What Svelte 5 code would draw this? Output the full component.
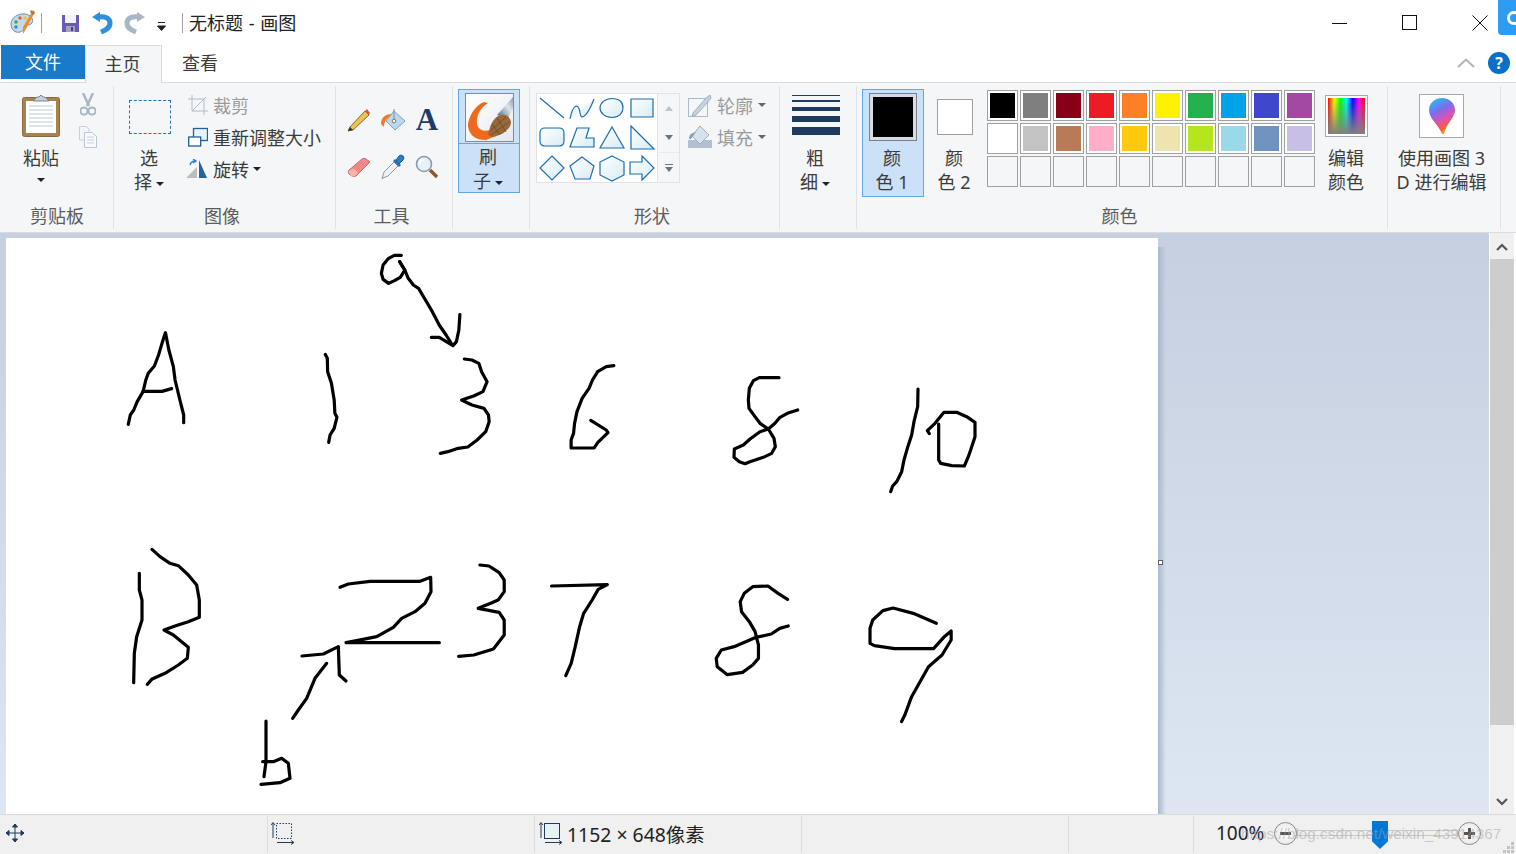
<script>
  const row1 = ['#000000','#7f7f7f','#880015','#ed1c24','#ff7f27','#fff200','#22b14c','#00a2e8','#3f48cc','#a349a4']
  const row2 = ['#ffffff','#c3c3c3','#b97a57','#ffaec9','#ffc90e','#efe4b0','#b5e61d','#99d9ea','#7092be','#c8bfe7']
  const row3 = Array(10).fill('transparent')

  // strokes traced from crops, each group has its own offset + scale
  const groups = [
    { x: 100, y: 240, sx: 2.9037, sy: 3, paths: [
      'M82 553 L88 525 L98 510 L108 485 L125 455 L133 420 L140 400 L158 378 L170 345 L180 310 L190 278 L200 330 L213 380 L218 420 L232 480 L243 525 L243 548',
      'M125 454 L180 454 L208 446',
      'M654 343 L660 355 L661 395 L672 430 L680 480 L682 520 L688 532 L680 565 L668 585 L664 607',
      'M875 46 L855 46 L838 55 L822 75 L817 100 L822 118 L838 130 L855 122 L872 112 L885 90 L870 65',
      'M870 65 L885 90 L895 115 L910 135 L925 145 L945 180 L965 215 L985 255 L1005 285 L1020 310',
      'M962 292 L985 292 L1025 317 L1035 305 L1042 270 L1045 224',
      'M1058 357 L1080 360 L1100 370 L1108 395 L1124 425 L1112 455 L1085 468 L1050 480 L1080 495 L1115 505 L1128 525 L1130 545 L1120 575 L1095 600 L1068 621 L1040 625 L1010 635 L988 640',
      'M1492 377 L1470 380 L1445 395 L1430 420 L1420 445 L1400 475 L1385 515 L1378 550 L1375 580 L1368 600 L1368 624 L1435 624 L1445 608 L1475 578 L1470 570 L1425 541'
    ]},
    { x: 700, y: 360, sx: 3, sy: 3, paths: [
      'M237 53 L178 53 L160 62 L148 85 L145 120 L147 145 L165 170 L180 190 L205 207 L222 235 L226 260 L215 280 L190 292 L150 305 L135 311 L118 305 L102 292 L103 267 L130 255 L150 237 L180 215 L205 207 L225 190 L240 172 L262 160 L293 150',
      'M654 87 L653 140 L642 185 L635 225 L622 265 L612 300 L605 335 L590 365 L578 378 L572 395',
      'M688 221 L682 212 L705 190 L732 157 L770 157 L800 170 L825 187 L825 230 L812 270 L805 290 L793 318 L755 317 L722 310 L716 300 L716 192'
    ]},
    { x: 110, y: 540, sx: 3, sy: 3, paths: [
      'M88 100 L88 150 L96 180 L96 240 L80 290 L73 340 L71 428',
      'M126 28 L150 50 L180 70 L205 77 L235 105 L260 135 L268 180 L268 232 L235 245 L195 258 L162 270 L190 285 L235 322 L232 355 L205 375 L165 400 L125 418 L112 433',
      'M690 142 L715 132 L780 124 L930 124 L962 112 L963 155 L945 190 L915 215 L875 235 L850 262 L800 290 L740 302 L708 308 L988 308',
      'M576 348 L640 342 L685 320 L688 405 L708 423',
      'M650 370 L615 415 L590 475 L565 510 L548 535',
      'M468 543 L468 665 L462 710',
      'M458 665 L490 665 L515 655 L535 670 L540 715 L510 728 L453 733'
    ]},
    { x: 440, y: 550, sx: 2.958, sy: 3, paths: [
      'M118 45 L145 48 L175 68 L190 90 L190 125 L172 150 L150 160 L113 175 L175 187 L190 210 L190 255 L158 297 L100 315 L55 319',
      'M330 108 L495 104 L468 118 L450 150 L425 190 L413 230 L400 290 L388 340 L372 377',
      'M1028 148 L1000 130 L970 108 L925 110 L900 130 L888 155 L892 185 L915 215 L932 245 L942 285 L942 325 L925 345 L895 367 L850 374 L820 350 L817 325 L832 300 L870 290 L935 262 L980 252 L1005 235 L1030 228',
      'M1468 220 L1400 190 L1340 174 L1310 182 L1280 210 L1272 235 L1272 280 L1285 287 L1345 296 L1460 296 L1490 262 L1512 243 L1512 270 L1485 315 L1445 350 L1420 395 L1395 440 L1375 495 L1365 515'
    ]}
  ]

  const shapes = [
    'M3 3 L27 23',
    'M3 24 C6 8 12 8 13 18 C14 27 21 20 27 4',
    'M15 3.5 C23 3.5 26 8 26 13 C26 18 22 22.5 15 22.5 C8 22.5 3 18 3 13 C3 8 8 3.5 15 3.5 Z',
    'M4 4 H26 V22 H4 Z',
    'M8 4 H22 Q27 4 27 9 V17 Q27 22 22 22 H8 Q3 22 3 17 V9 Q3 4 8 4 Z',
    'M10 4 H22 L19 14 H27 V23 H3 Z',
    'M15 3 L27 24 H3 Z',
    'M4 2 L27 25 H4 Z',
    'M15 2 L27 14 L15 26 L3 14 Z',
    'M15 3 L27 12 L23 25 H8 L3 12 Z',
    'M15 2 L27 8 V21 L15 27 L3 21 V8 Z',
    'M3 8 H15 V2 L27 14 L15 26 V20 H3 Z'
  ]
</script>

<div class="app">
  <header class="titlebar">
    <svg class="palette" width="28" height="28" viewBox="0 0 28 28">
      <path d="M2 16 C2 10 9 5 16 6 C22 7 25 11 23 15 C21 18 18 16 16 19 C15 23 11 25 7 24 C4 23 2 20 2 16 Z" fill="#c4d9ea" stroke="#6f8fae"/>
      <circle cx="7" cy="14" r="1.7" fill="#3fa34d"/><circle cx="11" cy="10" r="1.7" fill="#e2574c"/>
      <circle cx="16" cy="10" r="1.7" fill="#f1c232"/><circle cx="7" cy="19" r="1.7" fill="#3d85c6"/>
      <path d="M24 2 L26 4 L17 21 L14 26 L14 19 Z" fill="#e98f2c"/>
      <path d="M22 2 L26 5 L24 7 L21 4 Z" fill="#a67c52"/>
    </svg>
    <span class="tsep first"></span>
    <svg class="save" width="17" height="17" viewBox="0 0 17 17">
      <path d="M0 0 H17 V17 H0 Z" fill="#6a5bb0"/><path d="M3 0 H14 V8 H3 Z" fill="#f4f3fa"/><path d="M4 11 H13 V17 H4 Z" fill="#a7a1c0"/><path d="M9 12 H11 V16 H9 Z" fill="#4a3c8c"/>
    </svg>
    <svg class="undo" width="21" height="22" viewBox="0 0 21 22">
      <path d="M0 5 L8 0 V10 Z" fill="#2e8fdb"/>
      <path d="M6 5 C13 4 18 6 18 11 C18 16 14 18 9 20" fill="none" stroke="#2e8fdb" stroke-width="5"/>
    </svg>
    <svg class="redo" width="21" height="22" viewBox="0 0 21 22">
      <path d="M21 5 L13 0 V10 Z" fill="#a9b6c4"/>
      <path d="M15 5 C8 4 3 6 3 11 C3 16 7 18 12 20" fill="none" stroke="#a9b6c4" stroke-width="5"/>
    </svg>
    <svg class="qat" width="9" height="9" viewBox="0 0 9 9">
      <path d="M1 0.5 H8 M0.5 4 H8.5 L4.5 8.5 Z" fill="#222" stroke="#222"/>
    </svg>
    <span class="tsep second"></span>
    <span class="title">无标题 - 画图</span>
    <div class="winctl">
      <svg width="16" height="16" viewBox="0 0 16 16"><path d="M0 8.5 H15" stroke="#111"/></svg>
      <svg width="16" height="16" viewBox="0 0 16 16"><rect x="0.5" y="0.5" width="14" height="14" fill="none" stroke="#111"/></svg>
      <svg width="16" height="16" viewBox="0 0 16 16"><path d="M0.5 0.5 L15.5 15.5 M15.5 0.5 L0.5 15.5" stroke="#111"/></svg>
    </div>
    <div class="floatblue"><span></span></div>
  </header>

  <nav class="tabs">
    <span class="tab file">文件</span>
    <span class="tab home">主页</span>
    <span class="tab view">查看</span>
    <div class="tabright">
      <svg width="18" height="10" viewBox="0 0 18 10"><path d="M1 9 L9 1.5 L17 9" fill="none" stroke="#b4b4b4" stroke-width="2"/></svg>
      <span class="help">?</span>
    </div>
  </nav>

  <section class="ribbon">
    <div class="group clip">
      <div class="body">
        <div class="bigcol paste">
          <svg width="38" height="43" viewBox="0 0 38 43">
            <rect x="0.5" y="3.5" width="37" height="39" rx="2" fill="#a8834f" stroke="#8b6a3a"/>
            <rect x="4" y="7" width="30" height="32" fill="#fff"/>
            <path d="M7 12 H31 M7 16 H31 M7 20 H31 M7 24 H31 M7 28 H31 M7 32 H31" stroke="#b9c6d3"/>
            <path d="M11 7 L15 3 H17 L19 1 L21 3 H23 L27 7 Z" fill="#c9ced3" stroke="#7d858c"/>
          </svg>
          <span class="txt top">粘贴</span>
          <i class="caret solo"></i>
        </div>
        <div class="smallcol">
          <svg width="16" height="24" viewBox="0 0 16 24">
            <path d="M3 0 L9 13 M13 0 L7 13" stroke="#a6b4c4" stroke-width="2.4" fill="none"/>
            <circle cx="4" cy="18" r="3.6" fill="none" stroke="#a6b4c4" stroke-width="2"/><circle cx="12" cy="18" r="3.6" fill="none" stroke="#a6b4c4" stroke-width="2"/>
          </svg>
          <svg width="18" height="22" viewBox="0 0 18 22">
            <path d="M0.5 0.5 H7 L10 3 V14 H0.5 Z" fill="#f3f6f9" stroke="#c3d0de"/>
            <path d="M5.5 6.5 H13 L17.5 10.5 V21.5 H5.5 Z" fill="#f7f9fb" stroke="#b6c6d6"/>
            <path d="M8 11 H15 M8 14 H15 M8 17 H15" stroke="#c3d0de"/>
          </svg>
        </div>
      </div>
      <div class="label">剪贴板</div>
    </div>

    <div class="group image">
      <div class="body">
        <div class="bigcol select">
          <div class="dashed"></div>
          <span class="txt nudge">选</span>
          <span class="txt nudge">择<i class="caret"></i></span>
        </div>
        <div class="cmds">
          <div class="cmd off">
            <svg width="20" height="20" viewBox="0 0 20 20"><path d="M4 0 V16 H20 M0 4 H16 V20 M4 16 L18 2" fill="none" stroke="#b0bccb"/></svg>
            <span>裁剪</span>
          </div>
          <div class="cmd">
            <svg width="20" height="20" viewBox="0 0 20 20"><rect x="5.5" y="1.5" width="14" height="12" fill="#e6f2f8" stroke="#1f5f9c" stroke-width="1.3"/><rect x="0.7" y="10" width="12" height="9" fill="#fff" stroke="#1f5f9c" stroke-width="1.3"/></svg>
            <span>重新调整大小</span>
          </div>
          <div class="cmd">
            <svg width="22" height="20" viewBox="0 0 22 20"><path d="M0 19 L11 8 V19 Z" fill="#bcbcbc"/><path d="M13 1 L21 19 H13 Z" fill="#27639e"/><path d="M4 6 Q5 2 9 2 M7 0 L10 2 L7 4" fill="none" stroke="#2b83d2" stroke-width="1.4"/></svg>
            <span>旋转</span><i class="caret"></i>
          </div>
        </div>
      </div>
      <div class="label shift">图像</div>
    </div>

    <div class="group tools">
      <div class="body toolgrid">
        <svg width="24" height="24" viewBox="0 0 24 24">
          <path d="M3 19 L18 3 L22 7 L6 22 L1 23 Z" fill="#f2c14e" stroke="#7a6a3a"/><path d="M18 3 L20 1 L23 5 L22 7 Z" fill="#d9534f"/><path d="M1 23 L3 19 L6 22 Z" fill="#333"/>
        </svg>
        <svg width="26" height="24" viewBox="0 0 26 24">
          <path d="M14 3 L25 13 L15 22 L6 13 Z" fill="#bcd8ee" stroke="#7ea4c4"/>
          <path d="M1 16 C1 9 6 6 12 6 L8 10 C6 11 4 15 4 19 Z" fill="#ee7a2a"/>
          <path d="M14 1 V12" stroke="#8a8a8a"/><circle cx="14" cy="13" r="1.8" fill="#fff" stroke="#777"/>
        </svg>
        <span class="bigA">A</span>
        <svg width="24" height="22" viewBox="0 0 24 22">
          <path d="M1 15 L15 3 Q17 1.5 19 3 L23 6 L9 20 Q7 21 5 20 L2 18 Z" fill="#f08a8a" stroke="#c86a6a"/><path d="M1 15 L7 13 L11 17 L8 20 Q6 21 4 20 Z" fill="#f4b6ac"/>
        </svg>
        <svg width="24" height="26" viewBox="0 0 24 26">
          <path d="M2 24 L1 25 L3 18 L13 8 L17 12 L7 22 Z" fill="#eef2f6" stroke="#8b98a6"/>
          <path d="M12 7 L18 13 L20 11 L14 5 Z" fill="#2d6fb5"/>
          <path d="M15 6 L18 2 Q20 0 22 2 Q24 4 22 6 L18 10 Z" fill="#2b7fc6" stroke="#1f5f9c"/>
        </svg>
        <svg width="24" height="24" viewBox="0 0 24 24">
          <circle cx="9" cy="9" r="7.5" fill="#e9f1f8" stroke="#8c9aa8" stroke-width="1.6"/>
          <path d="M4.5 9 Q5 5 9 4.5" fill="none" stroke="#fff" stroke-width="1.5"/>
          <path d="M15 15 L22 22" stroke="#8a5a30" stroke-width="3.4"/>
        </svg>
      </div>
      <div class="label shift">工具</div>
    </div>

    <div class="group brush">
      <div class="body">
        <div class="brushbtn">
          <div class="brushtop">
            <div class="brushicon">
              <svg width="47" height="47" viewBox="0 0 47 47">
                <defs>
                  <linearGradient id="handle" x1="0" y1="1" x2="1" y2="0"><stop offset="0" stop-color="#4a5f80"/><stop offset=".6" stop-color="#dfe5ec"/><stop offset="1" stop-color="#8d99a8"/></linearGradient>
                </defs>
                <path d="M31 21 L47 3 V14 L42 24 Z" fill="url(#handle)"/>
                <path d="M18 8 C8 12 2 24 2 32 C3 40 8 46 20 46 L30 42 L24 36 C18 38 12 36 11 30 C10 22 14 14 22 9 Z" fill="#ee6a1f"/>
                <path d="M32 22 C38 19 44 22 45 28 C45 35 36 42 26 43 L22 41 C24 32 26 26 32 22 Z" fill="#96683b"/>
                <path d="M25 36 L40 23 M25 41 L43 28 M31 24 L40 38 M26 30 L34 41" stroke="#6d4822" stroke-width=".8"/>
              </svg>
            </div>
          </div>
          <div class="brushtext">
            <span class="txt nudge">刷</span>
            <span class="txt nudge">子<i class="caret"></i></span>
          </div>
        </div>
      </div>
      <div class="label"></div>
    </div>

    <div class="group shapes">
      <div class="body">
        <div class="gallery">
          {#each shapes as d}
            <svg width="30" height="30" viewBox="0 0 30 30">
              <defs>
                <linearGradient id="shfill" x1="0" y1="0" x2="1" y2="1"><stop offset="0" stop-color="#fff"/><stop offset="1" stop-color="#d8ecf4"/></linearGradient>
              </defs>
              <path {d} fill="url(#shfill)" stroke="#1c6eae" stroke-width="1.2"/>
            </svg>
          {/each}
        </div>
        <div class="gscroll">
          <span class="gb"><i class="up"></i></span>
          <span class="gb"><i class="down"></i></span>
          <span class="gb more"><i class="bar"></i><i class="down"></i></span>
        </div>
        <div class="cmds outline">
          <div class="cmd off">
            <svg width="24" height="23" viewBox="0 0 24 23"><rect x="0.5" y="4.5" width="19" height="18" fill="none" stroke="#a9bace"/><path d="M5 19 L18 4 L22 1 L23 4 L20 8 L8 21 L4 22 Z" fill="#c5d2e0" stroke="#a0b0c3"/></svg>
            <span>轮廓</span><i class="caret gray"></i>
          </div>
          <div class="cmd off">
            <svg width="24" height="24" viewBox="0 0 24 24"><rect x="0" y="15" width="24" height="8" fill="#b2c0d4"/><path d="M12 1 L21 10 L12 19 L4 11 Z" fill="#d8e2ec" stroke="#9eaec2"/><path d="M1 14 C1 9 4 8 8 7 L3 14 Z" fill="#8f9fb6"/></svg>
            <span>填充</span><i class="caret gray"></i>
          </div>
        </div>
      </div>
      <div class="label shift">形状</div>
    </div>

    <div class="group size">
      <div class="body">
        <div class="bigcol thick">
          <div class="lines"><i class="l1"></i><i class="l2"></i><i class="l3"></i><i class="l4"></i><i class="l5"></i></div>
          <span class="txt nudge">粗</span>
          <span class="txt nudge">细<i class="caret"></i></span>
        </div>
      </div>
      <div class="label"></div>
    </div>

    <div class="group colors">
      <div class="body">
        <div class="colbtn active">
          <div class="bigswatch"><span></span></div>
          <span class="txt nudge">颜</span>
          <span class="txt nudge">色 1</span>
        </div>
        <div class="colbtn second">
          <div class="swatch2"></div>
          <span class="txt nudge">颜</span>
          <span class="txt nudge">色 2</span>
        </div>
        <div class="palettegrid">
          {#each [...row1, ...row2, ...row3] as c}
            <span class="cell"><span style="background:{c}"></span></span>
          {/each}
        </div>
        <div class="bigcol edit">
          <div class="rainbow"><span></span></div>
          <span class="txt">编辑</span>
          <span class="txt">颜色</span>
        </div>
      </div>
      <div class="label shift">颜色</div>
    </div>

    <div class="group p3d">
      <div class="body">
        <div class="bigcol threed">
          <div class="p3dicon">
            <svg width="28" height="38" viewBox="0 0 28 38">
              <defs>
                <linearGradient id="drop" x1="0.2" y1="0" x2="0.6" y2="1">
                  <stop offset="0" stop-color="#22c3f0"/><stop offset=".35" stop-color="#7b6cf0"/><stop offset=".65" stop-color="#e64fa8"/><stop offset=".85" stop-color="#f4622e"/><stop offset="1" stop-color="#f3b32a"/>
                </linearGradient>
              </defs>
              <path d="M14 1 C22 1 27 7 27 13 C27 21 18 26 16 37 L14 37 C11 28 1 22 1 13 C1 7 6 1 14 1 Z" fill="url(#drop)"/>
            </svg>
          </div>
          <span class="txt">使用画图 3</span>
          <span class="txt">D 进行编辑</span>
        </div>
      </div>
      <div class="label"></div>
    </div>
  </section>

  <main class="workspace">
    <div class="area">
      <div class="paper">
        <svg width="1152" height="648" viewBox="6 238 1152 648">
          {#each groups as g}
            <g transform="translate({g.x} {g.y}) scale({1 / g.sx} {1 / g.sy})">
              {#each g.paths as d}
                <path {d} fill="none" stroke="#000" stroke-width="3.2" stroke-linecap="round" stroke-linejoin="round" vector-effect="non-scaling-stroke"/>
              {/each}
            </g>
          {/each}
        </svg>
      </div>
      <span class="shadow"></span>
      <span class="handle"></span>
    </div>
    <div class="vscroll">
      <span class="sbtn"><svg width="12" height="8" viewBox="0 0 12 8"><path d="M1 7 L6 2 L11 7" fill="none" stroke="#555" stroke-width="2.2"/></svg></span>
      <span class="thumb"></span>
      <span class="strack"></span>
      <span class="sbtn"><svg width="12" height="8" viewBox="0 0 12 8"><path d="M1 1 L6 6 L11 1" fill="none" stroke="#555" stroke-width="2.2"/></svg></span>
    </div>
  </main>

  <footer class="status">
    <div class="st s1">
      <svg width="20" height="20" viewBox="0 0 20 20"><path d="M10 1 V19 M1 10 H19 M10 1 L7.5 4 H12.5 Z M10 19 L7.5 16 H12.5 Z M1 10 L4 7.5 V12.5 Z M19 10 L16 7.5 V12.5 Z" fill="#1f3c5c" stroke="#1f3c5c"/></svg>
    </div>
    <div class="st s2">
      <svg width="24" height="23" viewBox="0 0 24 23"><rect x="5.5" y="1.5" width="15" height="15" fill="none" stroke="#1f3c5c" stroke-dasharray="1.5 1.5"/><path d="M2 1 V16 M0 3 L2 0.5 L4 3 M6 20.5 H22 M20 18.5 L23 20.5 L20 22.5" fill="none" stroke="#1f3c5c"/></svg>
    </div>
    <div class="st s3">
      <svg width="24" height="23" viewBox="0 0 24 23"><rect x="5.5" y="1.5" width="15" height="15" fill="#e6f2f6" stroke="#1f3c5c"/><path d="M2 1 V16 M0 3 L2 0.5 L4 3 M6 20.5 H22 M20 18.5 L23 20.5 L20 22.5" fill="none" stroke="#1f3c5c"/></svg>
      <span>1152 × 648像素</span>
    </div>
    <div class="st s4"></div>
    <div class="st s5"></div>
    <div class="st s6">
      <span class="pct">100%</span>
      <span class="zbtn"><i class="minus"></i></span>
      <div class="slider">
        <span class="knob"></span>
      </div>
      <span class="zbtn"><i class="minus"></i><i class="vert"></i></span>
    </div>
    <span class="wm">https://blog.csdn.net/weixin_43914367</span>
    <svg class="grip" width="12" height="12" viewBox="0 0 12 12"><path d="M8 0 H11 V3 H8 Z M4 4 H7 V7 H4 Z M8 4 H11 V7 H8 Z M0 8 H3 V11 H0 Z M4 8 H7 V11 H4 Z M8 8 H11 V11 H8 Z" fill="#c4c4c4"/></svg>
  </footer>
</div>

<style>
  :global(body) {
    margin: 0;
    overflow: hidden;
  }
  .app {
    width: 1516px;
    height: 854px;
    display: flex;
    flex-direction: column;
    background: #fff;
    color: #3b3b3b;
    font-family: "Noto Sans", "Noto Sans CJK SC", sans-serif;
    font-size: 18px;
    overflow: hidden;
  }

  /* title bar */
  .titlebar {
    height: 45px;
    flex: none;
    display: flex;
    align-items: center;
    position: relative;
    color: #222;
  }
  .palette { margin-left: 9px; margin-top: -1px; }
  .tsep { width: 1px; height: 20px; background: #a0a0a0; }
  .tsep.first { margin-left: 4px; }
  .save { margin-left: 20px; margin-top: 2px; }
  .undo { margin-left: 13px; }
  .redo { margin-left: 11px; }
  .qat { margin-left: 12px; margin-top: 7px; }
  .tsep.second { margin-left: 16px; }
  .title { margin-left: 6px; line-height: 24px; font-size: 18px; word-spacing: 1px; }
  .winctl {
    margin-left: auto;
    margin-right: 28px;
    display: flex;
    gap: 54px;
    margin-top: 1px;
  }
  .floatblue {
    position: absolute;
    top: 0;
    left: 1498px;
    width: 18px;
    height: 35px;
    background: #2e9bf5;
    border-radius: 0 0 0 4px;
    overflow: hidden;
  }
  .floatblue span {
    position: absolute;
    left: 9px;
    top: 11px;
    width: 14px;
    height: 14px;
    border: 3px solid #fff;
    border-radius: 50%;
    box-sizing: border-box;
  }

  /* tabs */
  .tabs {
    height: 38px;
    flex: none;
    display: flex;
    border-bottom: 1px solid #dadbdc;
    box-sizing: border-box;
  }
  .tab {
    box-sizing: border-box;
    text-align: center;
  }
  .file {
    width: 84px;
    height: 34px;
    margin-left: 1px;
    background: #1979ca;
    color: #fff;
    line-height: 34px;
  }
  .home {
    width: 77px;
    height: 38px;
    line-height: 36px;
    background: #f5f6f7;
    border: 1px solid #dadbdc;
    border-bottom: none;
    padding-right: 2px;
  }
  .view {
    width: 76px;
    line-height: 36px;
  }
  .tabright {
    margin-left: auto;
    margin-right: 6px;
    display: flex;
    align-items: center;
    gap: 13px;
    height: 36px;
  }
  .help {
    width: 22px;
    height: 22px;
    border-radius: 50%;
    background: #0a6fc8;
    color: #fff;
    font-weight: 700;
    font-size: 16px;
    line-height: 22px;
    text-align: center;
  }

  /* ribbon */
  .ribbon {
    height: 150px;
    flex: none;
    box-sizing: border-box;
    display: flex;
    padding: 3px 0 3px;
    background: #f5f6f7;
    border-bottom: 1px solid #dadbdc;
  }
  .group {
    box-sizing: border-box;
    flex: none;
    display: flex;
    flex-direction: column;
    border-right: 1px solid #e1e2e3;
    position: relative;
  }
  .body {
    height: 118px;
    display: flex;
    flex: none;
  }
  .label {
    height: 25px;
    line-height: 25px;
    text-align: center;
    color: #5c5c5c;
  }
  .label.shift { padding-right: 5px; }
  .txt {
    display: block;
    height: 24px;
    line-height: 24px;
    white-space: nowrap;
    text-align: center;
  }
  .txt.nudge { padding-right: 2px; }
  .caret {
    display: inline-block;
    width: 0;
    height: 0;
    border: 4px solid transparent;
    border-top: 4px solid #222;
    border-bottom: none;
    margin-left: 4px;
    vertical-align: middle;
  }
  .caret.gray { border-top-color: #666; margin-left: 5px; }
  .caret.solo { display: block; margin: 8px auto 0; }
  .bigcol {
    display: flex;
    flex-direction: column;
    align-items: center;
  }

  .clip { width: 114px; }
  .clip .label { padding-left: 1px; }
  .paste { margin-left: 22px; width: 38px; padding-top: 8px; }
  .paste .top { margin-top: 9px; }
  .smallcol {
    margin-left: 19px;
    width: 18px;
    padding-top: 7px;
    display: flex;
    flex-direction: column;
    align-items: center;
    gap: 9px;
  }

  .image { width: 222px; }
  .select { margin-left: 15px; width: 42px; padding-top: 14px; }
  .dashed {
    width: 42px;
    height: 34px;
    box-sizing: border-box;
    border: 1px dashed #2a6fb0;
    margin-bottom: 12px;
  }
  .cmds {
    margin-left: 17px;
    padding-top: 3px;
    display: flex;
    flex-direction: column;
  }
  .cmd {
    height: 32px;
    display: flex;
    align-items: center;
    white-space: nowrap;
  }
  .cmd svg { margin-right: 5px; }
  .cmd.off { color: #9a9a9a; }
  .image .cmd:last-child svg { margin-left: -2px; }

  .tools { width: 117px; }
  .toolgrid {
    box-sizing: border-box;
    padding: 10px 0 0 6px;
    display: grid;
    grid-template-columns: repeat(3, 34px);
    grid-auto-rows: 47px;
    place-items: center;
    height: 118px;
    align-content: start;
  }
  .bigA {
    font-family: "Liberation Serif", serif;
    font-weight: 700;
    font-size: 31px;
    line-height: 36px;
    color: #1f3c64;
  }

  .brush { width: 77px; }
  .brushbtn {
    margin: 3px 0 0 5px;
    width: 62px;
    height: 104px;
    box-sizing: border-box;
    background: #cbe1f7;
    border: 1px solid #62a7e8;
  }
  .brushtop {
    height: 54px;
    border-bottom: 1px solid #62a7e8;
    box-sizing: border-box;
    display: flex;
    justify-content: center;
    padding-top: 3px;
  }
  .brushicon {
    width: 47px;
    height: 47px;
    background: linear-gradient(135deg, #fff, #e5e9ee);
    border: 1px solid #8a8a8a;
  }
  .brushicon svg { display: block; }
  .brushtext { padding-top: 1px; }

  .shapes { width: 250px; }
  .gallery {
    margin: 7px 0 0 6px;
    width: 122px;
    height: 90px;
    box-sizing: border-box;
    padding-top: 1px;
    background: #fff;
    border: 1px solid #e1e2e3;
    display: grid;
    grid-template-columns: repeat(4, 30px);
    grid-auto-rows: 29.6px;
    align-items: center;
  }
  .gallery svg { display: block; }
  .gscroll {
    margin-top: 7px;
    width: 22px;
    height: 90px;
    box-sizing: border-box;
    border: 1px solid #e1e2e3;
    border-left: none;
    display: flex;
    flex-direction: column;
  }
  .gb {
    flex: 1;
    display: flex;
    flex-direction: column;
    align-items: center;
    justify-content: center;
    gap: 2px;
  }
  .gb .up { border: 4px solid transparent; border-bottom: 5px solid #bcc4cc; border-top: none; }
  .gb .down { border: 4px solid transparent; border-top: 5px solid #6a7480; border-bottom: none; }
  .gb .bar { width: 8px; height: 1px; background: #6a7480; }
  .gb.more { border-top: 1px solid #e9eaeb; }
  .outline { margin-left: 8px; padding-top: 3px; }
  .outline .cmd svg { margin-right: 5px; }

  .size { width: 77px; }
  .thick { margin-left: 12px; width: 48px; }
  .lines {
    width: 48px;
    height: 60px;
    display: flex;
    flex-direction: column;
  }
  .lines i { display: block; background: #1f3a5f; }
  .l1 { height: 1px; margin-top: 9px; }
  .l2 { height: 2px; margin-top: 4px; }
  .l3 { height: 4px; margin-top: 5px; }
  .l4 { height: 6px; margin-top: 5px; }
  .l5 { height: 8px; margin-top: 5px; }

  .colors { width: 531px; }
  .colbtn {
    box-sizing: border-box;
    width: 62px;
    height: 108px;
    margin: 3px 0 0 5px;
    border: 1px solid transparent;
    display: flex;
    flex-direction: column;
    align-items: center;
  }
  .colbtn.active {
    background: #cbe1f7;
    border-color: #62a7e8;
  }
  .bigswatch {
    box-sizing: border-box;
    width: 48px;
    height: 48px;
    margin-top: 3px;
    padding: 3px;
    background: #d5dce4;
    border: 1px solid #7f7f7f;
    margin-bottom: 5px;
  }
  .bigswatch span { display: block; height: 100%; background: #000; }
  .colbtn.second { margin-left: 0; }
  .swatch2 {
    box-sizing: border-box;
    width: 36px;
    height: 36px;
    margin-top: 9px;
    margin-bottom: 11px;
    background: #fff;
    border: 1px solid #a0a0a0;
  }
  .palettegrid {
    margin: 4px 0 0 1px;
    display: grid;
    grid-template-columns: repeat(10, 31px);
    grid-auto-rows: 31px;
    gap: 2px;
    align-content: start;
  }
  .cell {
    box-sizing: border-box;
    border: 1px solid #a0a0a0;
    padding: 2px;
    background: #fff;
  }
  .palettegrid .cell:nth-child(n + 21) { background: transparent; }
  .cell span { display: block; height: 100%; }
  .edit { margin-left: 10px; width: 42px; }
  .rainbow {
    box-sizing: border-box;
    width: 43px;
    height: 42px;
    margin-top: 9px;
    margin-bottom: 9px;
    padding: 2px;
    background: #fff;
    border: 1px solid #a8a8a8;
  }
  .rainbow span {
    display: block;
    height: 100%;
    background:
      linear-gradient(to bottom, rgba(128,128,128,0), #808080),
      linear-gradient(to right, #ff0000, #ffff00, #00ff00, #00ffff, #0000ff, #ff00ff, #ff0000);
  }

  .p3d { width: 113px; }
  .threed { width: 107px; }
  .p3dicon {
    box-sizing: border-box;
    width: 45px;
    height: 44px;
    margin-top: 8px;
    margin-bottom: 8px;
    background: #fff;
    border: 1px solid #a8a8a8;
    display: flex;
    align-items: center;
    justify-content: center;
  }

  /* work area */
  .workspace {
    flex: 1;
    min-height: 0;
    display: flex;
    background: linear-gradient(to bottom, #c5cfe0, #dde6f2);
  }
  .area {
    flex: 1;
    min-width: 0;
    padding: 5px 0 0 6px;
    position: relative;
    overflow: hidden;
  }
  .paper {
    width: 1152px;
    height: 648px;
    background: #fff;
  }
  .paper svg { display: block; }
  .shadow {
    position: absolute;
    left: 1158px;
    top: 14px;
    width: 8px;
    height: 648px;
    background: linear-gradient(to right, #a9b7ce, rgba(169,183,206,0));
  }
  .handle {
    position: absolute;
    left: 1158px;
    top: 327px;
    width: 3px;
    height: 3px;
    background: #fff;
    border: 1px solid #606060;
  }
  .vscroll {
    width: 27px;
    box-sizing: border-box;
    flex: none;
    display: flex;
    flex-direction: column;
    background: #f0f0f0;
    border-left: 1px solid #fff;
    border-right: 2px solid #fff;
  }
  .sbtn {
    height: 26px;
    flex: none;
    box-sizing: border-box;
    padding-top: 2px;
    display: flex;
    align-items: center;
    justify-content: center;
  }
  .thumb {
    height: 466px;
    flex: none;
    background: #cdcdcd;
  }
  .strack { flex: 1; }

  /* status bar */
  .status {
    height: 40px;
    flex: none;
    box-sizing: border-box;
    display: flex;
    background: #f0f0f0;
    border-top: 1px solid #d9d9d9;
    padding-bottom: 1px;
    position: relative;
    color: #222;
  }
  .st {
    box-sizing: border-box;
    height: 37px;
    margin-top: 1px;
    padding-bottom: 3px;
    display: flex;
    align-items: center;
    border-right: 1px solid #dcdcdc;
    flex: none;
  }
  .s1 { width: 268px; padding-left: 5px; }
  .s2 { width: 267px; padding-left: 3px; }
  .s3 { width: 267px; padding-left: 4px; gap: 4px; font-size: 19.4px; white-space: nowrap; }
  .s4 { width: 267px; }
  .s5 { width: 125px; }
  .s6 { border-right: none; width: 300px; padding-left: 22px; }
  .pct { width: 58px; font-size: 19px; }
  .zbtn {
    box-sizing: border-box;
    width: 23px;
    height: 23px;
    border-radius: 50%;
    border: 1px solid #8a8a8a;
    background: radial-gradient(circle, #fff, #e4e4e4);
    position: relative;
    flex: none;
  }
  .minus {
    position: absolute;
    left: 5px;
    top: 9px;
    width: 11px;
    height: 3px;
    background: #555;
  }
  .vert {
    position: absolute;
    left: 9px;
    top: 5px;
    width: 3px;
    height: 11px;
    background: #555;
  }
  .slider {
    width: 161px;
    height: 6px;
    box-sizing: border-box;
    border: 1px solid #c8c8c8;
    position: relative;
    flex: none;
  }
  .knob {
    position: absolute;
    left: 74px;
    top: -10px;
    width: 16px;
    height: 28px;
    background: #0078d7;
    clip-path: polygon(0 0, 100% 0, 100% 72%, 50% 100%, 0 72%);
  }
  .wm {
    position: absolute;
    left: 1241px;
    top: 7px;
    font-family: "Liberation Sans", sans-serif;
    font-size: 15.3px;
    line-height: 24px;
    color: rgba(165,165,165,.55);
    white-space: nowrap;
  }
  .grip {
    position: absolute;
    left: 1503px;
    top: 27px;
  }
</style>
